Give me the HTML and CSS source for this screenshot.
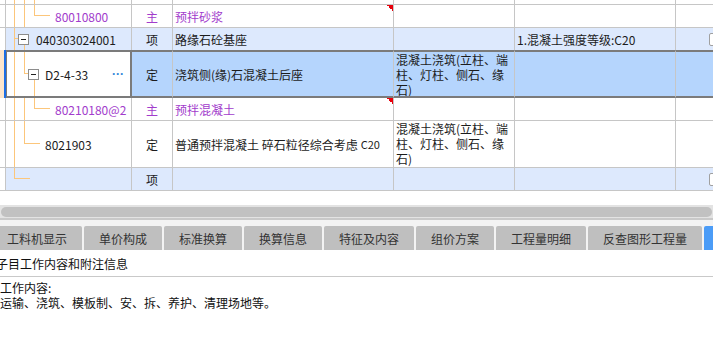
FILE: index.html
```html
<!DOCTYPE html>
<html lang="zh-CN">
<head>
  <meta charset="UTF-8">
  <meta name="viewport" content="width=device-width, initial-scale=1.0">
  <title>分部分项</title>
  <link rel="stylesheet" href="styles.css">
</head>
<body>
  <div class="grid">
    <div class="row row-top">
      <div class="cell c0"></div>
      <div class="cell c1 tree"><i class="ln v x1"></i><i class="ln v x2"></i><i class="ln v x3"></i></div>
      <div class="cell c2"></div>
      <div class="cell c3"></div>
      <div class="cell c4"></div>
      <div class="cell c5"></div>
      <div class="cell c6"></div>
    </div>

    <div class="row">
      <div class="cell c0"></div>
      <div class="cell c1 tree ind-leaf3"><i class="ln v x1"></i><i class="ln v x2"></i><i class="ln elbow3"></i><i class="ln arm3"></i><span class="sub">80010800</span></div>
      <div class="cell c2 sub">主</div>
      <div class="cell c3 sub flag">预拌砂浆</div>
      <div class="cell c4"></div>
      <div class="cell c5"></div>
      <div class="cell c6"></div>
    </div>

    <div class="row grp pre">
      <div class="cell c0"></div>
      <div class="cell c1 tree ind-box1"><i class="ln v x1"></i><i class="ln arm-box1"></i><i class="ln below2"></i><span class="tgl"></span>040303024001</div>
      <div class="cell c2">项</div>
      <div class="cell c3">路缘石砼基座</div>
      <div class="cell c4"></div>
      <div class="cell c5">1.混凝土强度等级:C20</div>
      <div class="cell c6"><span class="chk"></span></div>
    </div>

    <div class="row sel">
      <div class="cell c0"></div>
      <div class="cell c1 tree ind-box2"><i class="ln v x1"></i><i class="ln stem2"></i><i class="ln arm-box2"></i><i class="ln below3"></i><span class="tgl tgl-sel"></span>D2-4-33<span class="more">···</span></div>
      <div class="cell c2">定</div>
      <div class="cell c3">浇筑侧(缘)石混凝土后座</div>
      <div class="cell c4 wrap">混凝土浇筑(立柱、端柱、灯柱、侧石、缘石)</div>
      <div class="cell c5"></div>
      <div class="cell c6"></div>
    </div>

    <div class="row">
      <div class="cell c0"></div>
      <div class="cell c1 tree ind-leaf3"><i class="ln v x1"></i><i class="ln v x2"></i><i class="ln elbow3"></i><i class="ln arm3"></i><span class="sub">80210180@2</span></div>
      <div class="cell c2 sub">主</div>
      <div class="cell c3 sub flag">预拌混凝土</div>
      <div class="cell c4"></div>
      <div class="cell c5"></div>
      <div class="cell c6"></div>
    </div>

    <div class="row tall">
      <div class="cell c0"></div>
      <div class="cell c1 tree ind-leaf2"><i class="ln v x1"></i><i class="ln elbow2"></i><i class="ln arm2"></i>8021903</div>
      <div class="cell c2">定</div>
      <div class="cell c3">普通预拌混凝土 碎石粒径综合考虑 <small>C20</small></div>
      <div class="cell c4 wrap">混凝土浇筑(立柱、端柱、灯柱、侧石、缘石)</div>
      <div class="cell c5"></div>
      <div class="cell c6"></div>
    </div>

    <div class="row grp">
      <div class="cell c0"></div>
      <div class="cell c1 tree"><i class="ln elbow1"></i><i class="ln arm1"></i></div>
      <div class="cell c2">项</div>
      <div class="cell c3"></div>
      <div class="cell c4"></div>
      <div class="cell c5"></div>
      <div class="cell c6"><span class="chk"></span></div>
    </div>
  </div>

  <div class="hscroll"><div class="thumb"></div></div>

  <div class="tabs">
    <div class="tab first">工料机显示</div>
    <div class="tab">单价构成</div>
    <div class="tab">标准换算</div>
    <div class="tab">换算信息</div>
    <div class="tab">特征及内容</div>
    <div class="tab">组价方案</div>
    <div class="tab">工程量明细</div>
    <div class="tab">反查图形工程量</div>
    <div class="tab on"></div>
  </div>

  <div class="panel-title">子目工作内容和附注信息</div>
  <div class="panel-body">
    <div>工作内容:</div>
    <div>运输、浇筑、模板制、安、拆、养护、清理场地等。</div>
  </div>
</body>
</html>
```

FILE: styles.css
```css
* { box-sizing: border-box; }
body {
  margin: 0;
  width: 713px;
  height: 364px;
  overflow: hidden;
  background: #fff;
  color: #1c1c1c;
  font-family: "Noto Sans CJK SC", "Noto Sans", sans-serif;
  font-size: 12px;
}

/* grid */
.row {
  display: grid;
  grid-template-columns: 6px 126px 41px 221px 121px 161px 37px;
  height: 23px;
}
.row-top { height: 5px; }
.row.pre { height: 22px; }
.row.pre .cell { border-bottom: 0; }
.row.tall { height: 47px; }
.row.sel { height: 48px; }

.cell {
  display: flex;
  align-items: center;
  min-width: 0;
  padding: 0 2px;
  overflow: hidden;
  white-space: nowrap;
  border-right: 1px solid #c6c6c6;
  border-bottom: 1px solid #c6c6c6;
}
.c0 { padding: 0; }
.c2 { justify-content: center; padding: 0; }
.c6 { border-right: 0; }
.wrap {
  align-items: flex-start;
  white-space: normal;
  line-height: 15px;
}
.cell small { font-size: 11px; margin-left: 3px; }

.grp .cell { background: #dde9fd; }
.grp .c0 { background: #fff; }

.sel .cell {
  background: #b5d5fd;
  border-top: 2px solid #7b7b7b;
  border-bottom: 2px solid #7b7b7b;
}
.sel .c0 {
  background: #fde6cc;
  border-top: 0;
  border-bottom: 0;
  border-right: 2px solid #1b6ee6;
}
.sel .c1 {
  background: #fff;
  border-left: 1px solid #7b7b7b;
  border-right: 2px solid #7b7b7b;
}

.sub { color: #a23ccc; }
.flag {
  background: linear-gradient(to bottom left, #e8000b 50%, transparent 50%) no-repeat right top / 6px 6px;
}

/* tree column */
.tree { position: relative; padding: 0; }
.ind-box1 { padding-left: 12px; }
.ind-box2 { padding-left: 21px; }
.ind-leaf2 { padding-left: 39px; }
.ind-leaf3 { padding-left: 49px; }

.ln { position: absolute; background: #fcc67b; }
.v { top: 0; bottom: 0; width: 1px; }
.x1 { left: 8px; }
.x2 { left: 18px; }
.x3 { left: 28px; }
.sel .x1 { left: 7px; }

.elbow3 { left: 28px; top: 0; width: 1px; height: 11px; }
.arm3 { left: 28px; top: 10px; width: 16px; height: 1px; }
.elbow2 { left: 18px; top: 0; width: 1px; height: 23px; }
.arm2 { left: 18px; top: 22px; width: 16px; height: 1px; }
.elbow1 { left: 8px; top: 0; width: 1px; height: 11px; }
.arm1 { left: 8px; top: 10px; width: 16px; height: 1px; }
.arm-box1 { left: 8px; top: 10px; width: 4px; height: 1px; }
.below2 { left: 18px; top: 16px; bottom: 0; width: 1px; }
.stem2 { left: 17px; top: 0; width: 1px; height: 21px; }
.arm-box2 { left: 17px; top: 21px; width: 4px; height: 1px; }
.below3 { left: 27px; top: 27px; bottom: 0; width: 1px; }

.tgl {
  position: relative;
  flex: none;
  width: 11px;
  height: 11px;
  margin-right: 7px;
  border: 1px solid #8c8c8c;
  background: #fff;
}
.tgl::before {
  content: "";
  position: absolute;
  left: 2px;
  top: 4px;
  width: 5px;
  height: 1px;
  background: #222;
}
.tgl-sel { margin-right: 6px; }
.more {
  margin-left: auto;
  margin-right: 6px;
  color: #2f86d8;
  font-family: "Liberation Sans", sans-serif;
  font-weight: bold;
  font-size: 12px;
}

.chk {
  flex: none;
  width: 13px;
  height: 13px;
  margin-left: 31px;
  border: 1px solid #a0a0a0;
  border-radius: 2px;
  background: #fff;
}

/* scrollbar */
.hscroll {
  margin-top: 14px;
  height: 15px;
  padding-top: 2px;
  background: #e3e3e3;
  border-bottom: 2px solid #c9c9c9;
}
.thumb {
  height: 10px;
  margin: 0 1px;
  border-radius: 5px;
  background: #c1c1c1;
}

/* tabs */
.tabs {
  display: flex;
  gap: 2px;
  height: 30px;
  padding-top: 6px;
  background: #f3f3f3;
}
.tab {
  flex: none;
  display: flex;
  align-items: center;
  height: 24px;
  padding: 0 15px;
  background: #bfbfbf;
  color: #333;
  border-radius: 2px 2px 0 0;
}
.tab.first { margin-left: -8px; }
.tab.on { width: 40px; background: #4b9cf7; }

/* bottom panel */
.panel-title {
  display: flex;
  align-items: center;
  height: 27px;
  text-indent: -4px;
  border-bottom: 1px solid #c9c9c9;
  color: #111;
}
.panel-body {
  padding-top: 3px;
  line-height: 15px;
  color: #111;
}
```
